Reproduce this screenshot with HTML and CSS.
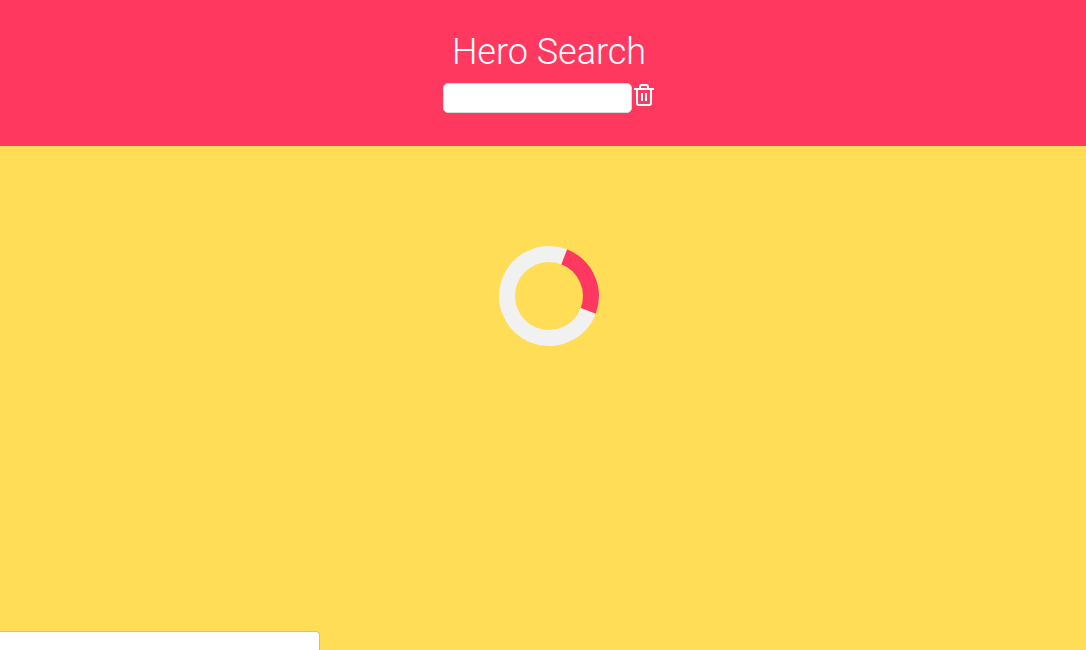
FILE: index.html
```
<!DOCTYPE html>
<html lang="en">
<head>
<meta charset="utf-8">
<title>Hero Search</title>
<link rel="stylesheet" href="styles.css">
</head>
<body>
<header class="header">
  <h1 class="title">Hero Search</h1>
  <form class="search">
    <input class="search-input" type="text" aria-label="Search heroes">
    <button class="clear" type="button" aria-label="Clear search">
      <svg width="20" height="22" viewBox="0 0 20 22" fill="none" stroke="#fff" stroke-width="2">
        <path d="M0 5H20M6 5V3a2 2 0 0 1 2-2h4a2 2 0 0 1 2 2v2M3 5V19a2 2 0 0 0 2 2h10a2 2 0 0 0 2-2V5M8 9v8M12 9v8"/>
      </svg>
    </button>
  </form>
</header>
<main class="results">
  <div class="loader" role="status" aria-label="Loading"></div>
</main>
<div class="status-panel"></div>
</body>
</html>
```
FILE: styles.css
```
* {
  box-sizing: border-box;
}

body {
  display: flex;
  flex-direction: column;
  min-height: 100vh;
  margin: 0;
  background: #ffdd57;
  font-family: Roboto, "Liberation Sans", sans-serif;
}

.header {
  display: flex;
  flex-direction: column;
  align-items: center;
  gap: 8px;
  padding: 30px 0 33px 12px;
  background: #ff3860;
  color: #fff;
}

.title {
  margin: 0;
  font-size: 36px;
  font-weight: 300;
  line-height: 45px;
}

.search {
  display: flex;
  align-items: flex-start;
  gap: 2px;
}

.search-input {
  width: 189px;
  height: 30px;
  padding: 4px 8px;
  border: 1px solid #dbdbdb;
  border-radius: 5px;
  background: #fff;
  font: inherit;
  font-size: 16px;
}

.clear {
  padding: 1px 1px 0 0;
  border: 0;
  background: none;
  cursor: pointer;
}

.clear svg {
  display: block;
}

.results {
  display: flex;
  flex: 1;
  justify-content: center;
  align-items: flex-start;
  padding: 100px 0 0 12px;
}

.loader {
  width: 100px;
  height: 100px;
  border: 16px solid #f1f1f1;
  border-top-color: #ff3860;
  border-radius: 50%;
  transform: rotate(66deg);
}

.status-panel {
  position: fixed;
  bottom: 0;
  left: 0;
  width: 320px;
  height: 19px;
  border: 1px solid #d9c263;
  border-width: 1px 1px 0 0;
  border-radius: 0 4px 0 0;
  background: #fff;
}
```
